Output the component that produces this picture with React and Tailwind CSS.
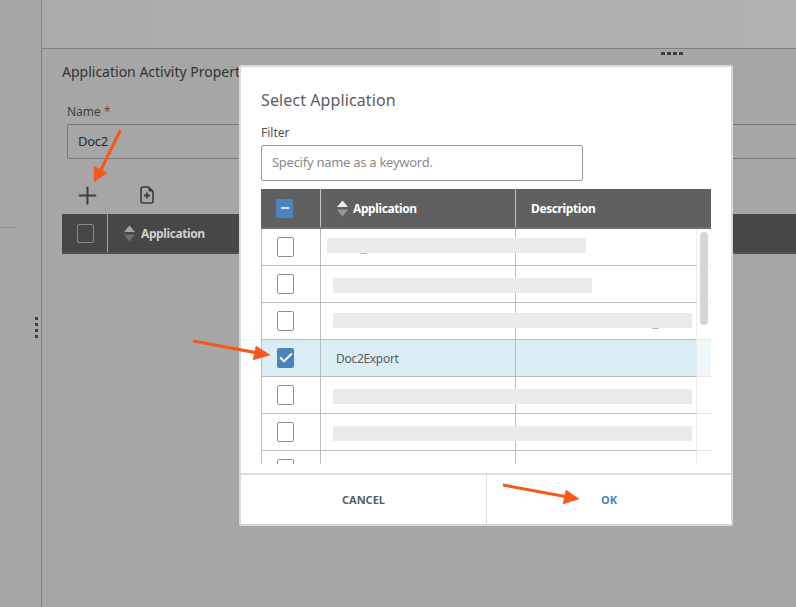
import React from "react";
import { Check, Minus, Plus } from "lucide-react";

const font = { fontFamily: '"Noto Sans", sans-serif' };

const SortIcon = ({ top, bottom }) => (
  <svg width="11" height="17" viewBox="0 0 11 17" className="shrink-0">
    <path d="M5.5 0.5 L11 7 L0 7 Z" fill={top} />
    <path d="M0 9.5 L11 9.5 L5.5 16.5 Z" fill={bottom} />
  </svg>
);

const FileAdd = () => (
  <svg width="14" height="18" viewBox="0 0 14 18" fill="none">
    <path
      d="M1 3 a2 2 0 0 1 2 -2 h5.5 L13 5.5 V15 a2 2 0 0 1 -2 2 H3 a2 2 0 0 1 -2 -2 Z"
      stroke="#3d3d3d"
      strokeWidth="1.6"
    />
    <path d="M9 1 V5 H13" fill="#3d3d3d" stroke="#3d3d3d" strokeWidth="1" />
    <path d="M7 6.5 V12.5 M4 9.5 H10" stroke="#3d3d3d" strokeWidth="1.8" />
  </svg>
);

const Arrows = () => (
  <svg width="796" height="607" viewBox="0 0 796 607" className="absolute left-0 top-0 pointer-events-none">
    <g fill="#f4581c" stroke="#f4581c">
      <path d="M120.5 130 L99 174" strokeWidth="3" fill="none" />
      <path d="M94 182 L94 166 L107 173 Z" strokeWidth="0.5" />
      <path d="M193 341 L258 353" strokeWidth="3" fill="none" />
      <path d="M270 355 L256 346 L253 360 Z" strokeWidth="0.5" />
      <path d="M503 485 L568 497" strokeWidth="3" fill="none" />
      <path d="M579 499 L566 490 L563 504 Z" strokeWidth="0.5" />
    </g>
  </svg>
);

const Checkbox = ({ checked }) => (
  <div
    className={
      checked
        ? "w-[17px] h-[20px] rounded-[2px] bg-[#4a84bd] flex items-center justify-center"
        : "w-[17px] h-[20px] rounded-[2px] bg-white border border-[#8f8f8f]"
    }
  >
    {checked && <Check size={16} strokeWidth={3} className="text-white" />}
  </div>
);

// placeholder bars are the blurred-out names in the screenshot
const rows = [
  { bar: "ml-[6px] w-[259px] top-[9px]", mark: "left-[98px] top-[24px]" },
  { bar: "ml-[12px] w-[259px] top-[12px]" },
  { bar: "ml-[12px] w-[359px] top-[10px]", mark: "left-[390px] top-[25px]" },
  { selected: true },
  { bar: "ml-[12px] w-[359px] top-[12px]" },
  { bar: "ml-[12px] w-[359px] top-[12px]" },
  {},
];

const Row = ({ row }) => (
  <div className={`relative flex h-[37px] shrink-0 border-b border-[#bdbdbd] ${row.selected ? "bg-[#daecf4]" : "bg-white"}`}>
    <div className="w-[59px] shrink-0 flex items-center border-r border-[#bdbdbd] pl-[15px]">
      <Checkbox checked={row.selected} />
    </div>
    <div className="w-[195px] shrink-0 border-r border-[#bdbdbd] flex items-center">
      {row.selected && (
        <span className="ml-[15px] mt-[1px] text-[12px] tracking-[-0.3px] text-[#5c5c5c]">Doc2Export</span>
      )}
    </div>
    <div className="flex-1" />
    {row.bar && <div className={`absolute left-[59px] h-[15px] bg-[#ebebeb] ${row.bar}`} />}
    {row.mark && <div className={`absolute w-[7px] h-px bg-[#bbbbbb] ${row.mark}`} />}
  </div>
);

const Dialog = () => (
  <div className="absolute left-[239px] top-[65px] w-[494px] h-[461px] bg-white border-2 border-[#d8d8d8] rounded-[2px] flex flex-col">
    <div className="flex-1 min-h-0 pl-[20px] pr-[20px] flex flex-col">
      <h2 className="mt-[22px] h-[22px] leading-[22px] text-[16px] tracking-[0.1px] text-[#5c5c5c]">Select Application</h2>
      <label className="mt-[14px] h-[16px] leading-[16px] text-[12px] text-[#4f4f4f]">Filter</label>
      <div className="mt-[4px] w-[322px] h-[36px] border border-[#9a9a9a] rounded-[2px] px-[10px] flex items-center text-[13px] tracking-[-0.27px] text-[#8a8a8a]">
        Specify name as a keyword.
      </div>
      <div className="mt-[8px] w-[450px] flex h-[40px] bg-[#606060] border-b-2 border-[#6e6e72] text-white text-[12px] font-bold tracking-[-0.4px]">
        <div className="w-[60px] flex items-center pl-[15px] border-r border-[#c4c4c4]">
          <div className="w-[17px] h-[19px] rounded-[1px] bg-[#4a84bd] flex items-center justify-center">
            <Minus size={12} strokeWidth={3} className="text-white" />
          </div>
        </div>
        <div className="w-[195px] flex items-center gap-[5px] pl-[16px] border-r border-[#c4c4c4]">
          <SortIcon top="#ededed" bottom="#9a9a9a" />
          <span className="mt-[2px]">Application</span>
        </div>
        <div className="flex-1 flex items-center pl-[15px]">
          <span className="mt-[2px]">Description</span>
        </div>
      </div>
      <div className="relative w-[450px] h-[235px] overflow-hidden border-l border-[#bdbdbd] flex flex-col">
        {rows.map((row, i) => (
          <Row key={i} row={row} />
        ))}
        <div className="absolute right-0 top-0 bottom-0 w-[15px] bg-white/60 border-l border-[#ececec]">
          <div className="mx-auto mt-[3px] w-[8px] h-[93px] rounded-[4px] bg-[#d5d5d5]" />
        </div>
      </div>
    </div>
    <div className="flex h-[51px] border-t-2 border-[#dcdcdc] text-[11px] font-bold">
      <button className="w-[246px] pt-[2px] border-r border-[#dcdcdc] text-[#5c5c5c]">CANCEL</button>
      <button className="flex-1 pt-[2px] text-[#4a84bd]">OK</button>
    </div>
  </div>
);

export default function App() {
  return (
    <div className="relative w-[796px] h-[607px] overflow-hidden flex bg-[#a6a6a6]" style={font}>
      <aside className="relative w-[42px] shrink-0 border-r border-[#808080] flex flex-col">
        <div className="mt-[227px] w-[17px] h-px bg-[#8c8c8c]" />
        <div className="ml-[35px] mt-[89px] flex flex-col gap-[3px]">
          {[0, 1, 2, 3].map((d) => (
            <span key={d} className="w-[3px] h-[3px] bg-[#3f3f3f]" />
          ))}
        </div>
      </aside>
      <main className="flex-1 min-w-0 flex flex-col">
        <div className="h-[49px] shrink-0 border-b border-[#808080] bg-gradient-to-r from-[#ababab] to-[#b1b1b1]" />
        <div className="flex gap-[2px] pl-[619px] mt-[3px] h-[3px]">
          {[0, 1, 2, 3].map((d) => (
            <span key={d} className="w-[4px] h-[3px] bg-[#3f3f3f]" />
          ))}
        </div>
        <section className="pl-[20px]">
          <h1 className="mt-[6px] h-[22px] leading-[22px] text-[14px] text-[#333]">Application Activity Properties</h1>
          <label className="block ml-[5px] mt-[21px] h-[16px] leading-[16px] text-[12px] text-[#3f3f3f]">
            Name <span className="text-[#8d3b2e]">*</span>
          </label>
          <div className="ml-[5px] mt-[4px] h-[35px] border border-[#777] rounded-l-[2px] border-r-0 pl-[10px] pt-[1px] flex items-center text-[13px] tracking-[-0.3px] text-[#2b2b2b]">
            Doc2
          </div>
          <div className="flex items-center mt-[17px] h-[38px] pl-[12px]">
            <Plus size={27} strokeWidth={1.8} className="text-[#3d3d3d]" />
            <div className="ml-[39px]">
              <FileAdd />
            </div>
          </div>
          <div className="flex h-[40px] bg-[#474747] border-b-2 border-[#525256] text-[#cfcfcf] text-[12px] font-bold tracking-[-0.4px]">
            <div className="w-[46px] flex items-center pl-[15px] border-r border-[#a0a0a0]">
              <div className="w-[17px] h-[19px] rounded-[2px] border border-[#8a8a8a]" />
            </div>
            <div className="flex items-center gap-[6px] pl-[16px]">
              <SortIcon top="#a6a6a6" bottom="#6e6e6e" />
              <span className="mt-[1px]">Application</span>
            </div>
          </div>
        </section>
      </main>
      <Dialog />
      <Arrows />
    </div>
  );
}
